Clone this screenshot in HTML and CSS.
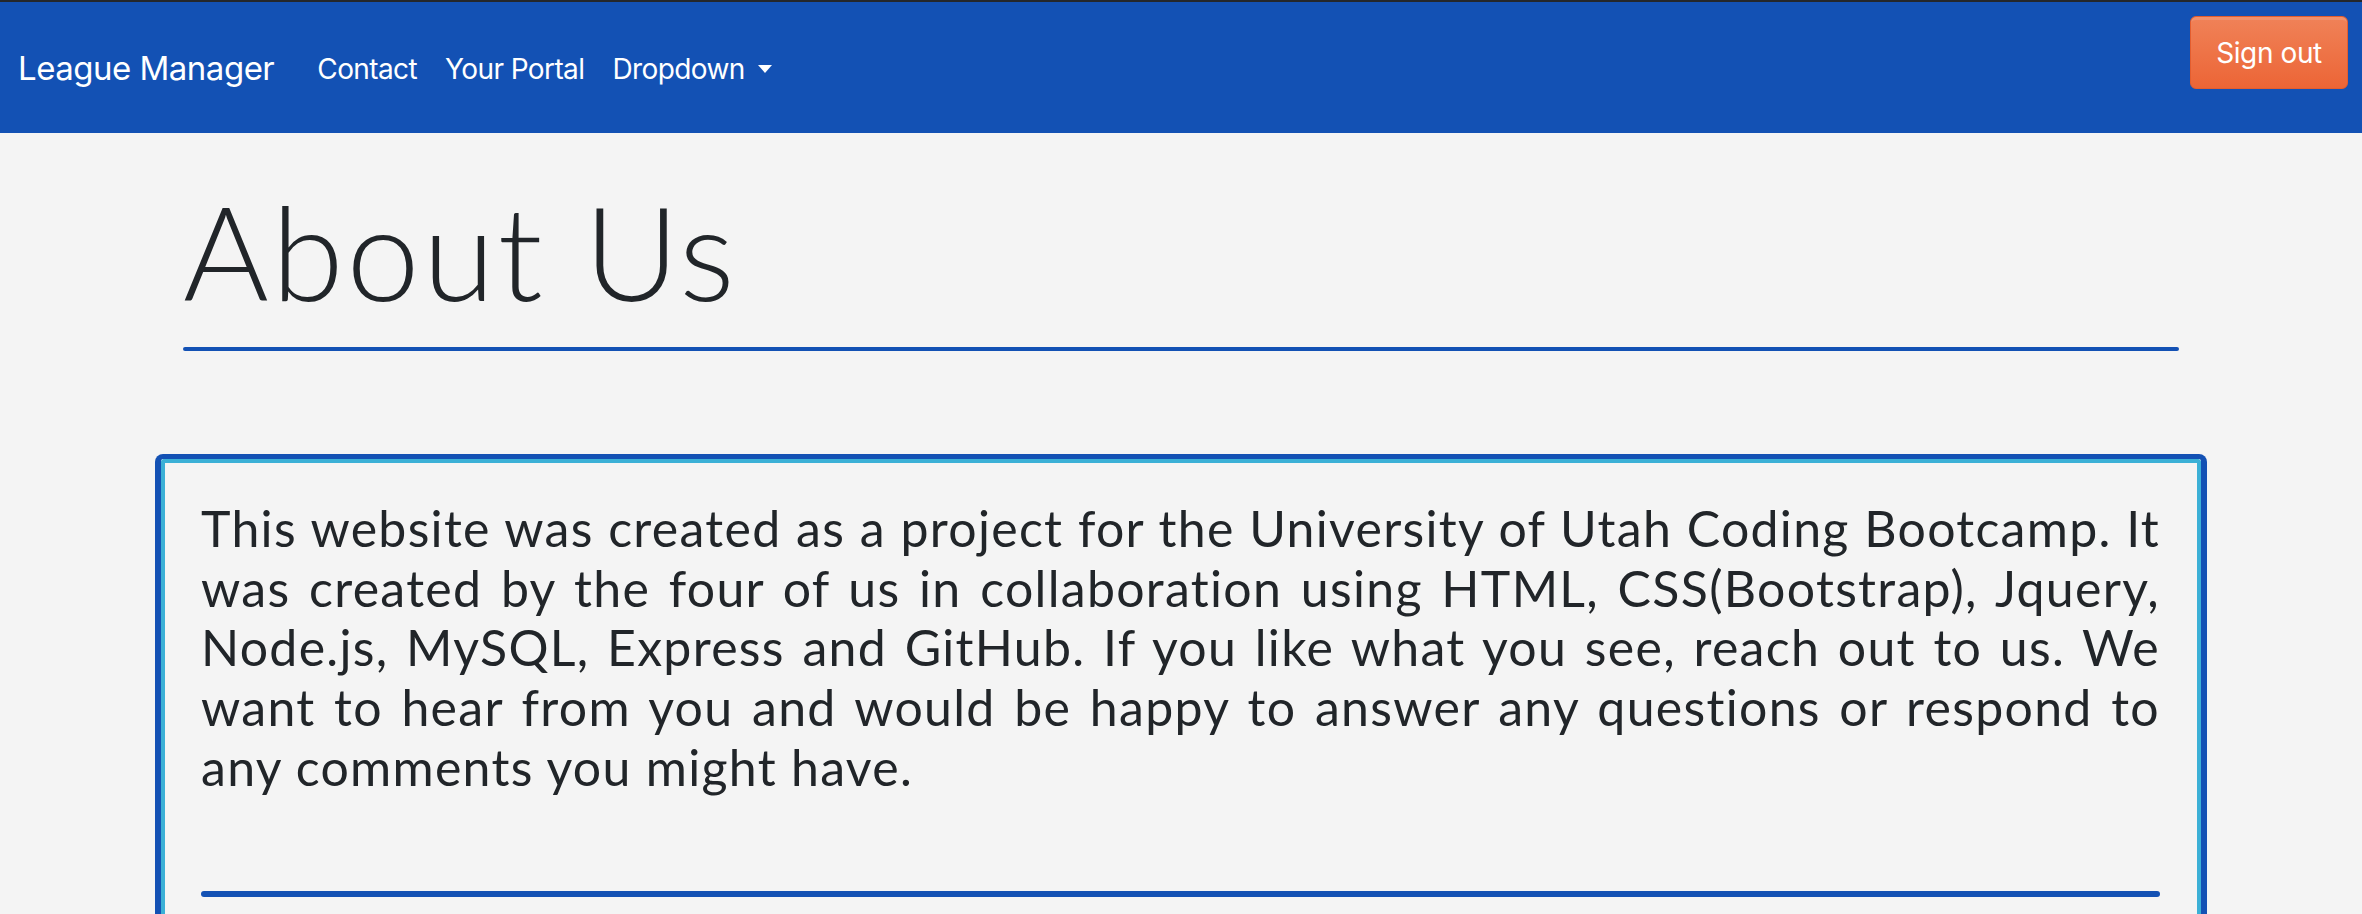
FILE: index.html
```html
<!DOCTYPE html>
<html lang="en">
<head>
<meta charset="utf-8">
<title>About Us - League Manager</title>
<link rel="stylesheet" href="styles.css">
</head>
<body>
<nav class="navbar">
  <div class="nav-left">
    <a class="brand" href="#">League Manager</a>
    <ul class="nav-links">
      <li><a href="#">Contact</a></li>
      <li><a href="#">Your Portal</a></li>
      <li><a href="#" class="dropdown-toggle">Dropdown<span class="caret"></span></a></li>
    </ul>
  </div>
  <button class="btn-signout" type="button">Sign out</button>
</nav>

<header class="page-head">
  <h1 class="page-title">About Us</h1>
  <hr class="rule">
</header>

<section class="about-card">
  <div class="about-inner">
    <p class="about-text">
      <span class="line">This website was created as a project for the University of Utah Coding Bootcamp. It</span>
      <span class="line">was created by the four of us in collaboration using HTML, CSS(Bootstrap), Jquery,</span>
      <span class="line">Node.js, MySQL, Express and GitHub. If you like what you see, reach out to us. We</span>
      <span class="line">want to hear from you and would be happy to answer any questions or respond to</span>
      <span class="line last">any comments you might have.</span>
    </p>
    <hr class="rule rule-thick">
  </div>
</section>
</body>
</html>
```

FILE: styles.css
```css
* { box-sizing: border-box; }

html, body {
  margin: 0;
  padding: 0;
}

body {
  background: #f4f4f4;
  color: #212529;
  font-family: Inter, "Liberation Sans", sans-serif;
  overflow: hidden;
}

/* ---------- navbar ---------- */
.navbar {
  display: flex;
  justify-content: space-between;
  align-items: flex-start;
  height: 133px;
  padding: 0 14px 0 18px;
  background: #1351b4;
  border-top: 2px solid #24272b;
}

.nav-left {
  display: flex;
  align-items: center;
  align-self: center;
  margin-top: 2px;
}

.brand {
  color: #ffffff;
  text-decoration: none;
  font-size: 33px;
  letter-spacing: -0.5px;
  line-height: 1.5;
  margin-right: 29px;
}

.nav-links {
  display: flex;
  list-style: none;
  margin: 0;
  padding: 0;
}

.nav-links a {
  display: flex;
  align-items: center;
  color: #ffffff;
  text-decoration: none;
  font-size: 28px;
  letter-spacing: -0.6px;
  line-height: 1.5;
  padding: 0 14px;
}

.caret {
  display: inline-block;
  width: 0;
  height: 0;
  margin-left: 13px;
  margin-top: 1px;
  border-top: 8px solid #ffffff;
  border-left: 7px solid transparent;
  border-right: 7px solid transparent;
}

.btn-signout {
  margin-top: 14px;
  width: 158px;
  height: 73px;
  padding: 0;
  border: 1px solid #e35d2e;
  border-radius: 6px;
  background: linear-gradient(#f08258, #ec6536);
  box-shadow: inset 0 5px 0 -2px rgba(255, 255, 255, 0.12);
  color: #ffffff;
  font-family: Inter, "Liberation Sans", sans-serif;
  font-size: 28px;
  letter-spacing: -0.4px;
  line-height: 1;
  cursor: pointer;
}

/* ---------- heading ---------- */
.page-head {
  width: 1996px;
  margin: 0 auto;
  padding-top: 39px;
}

.page-title {
  margin: 0;
  font-family: Lato, "Open Sans", sans-serif;
  font-weight: 300;
  font-size: 131px;
  line-height: 1.2;
  color: #212529;
  letter-spacing: 3px;
}

.rule {
  height: 4px;
  margin: 18px 0 0;
  border: 0;
  border-radius: 2px;
  background: #1351b4;
}

/* ---------- about card ---------- */
.about-card {
  width: 2052px;
  margin: 103px auto 0;
  border: 5px solid #1351b4;
  border-width: 5px 6px 0 6px;
  border-radius: 8px 8px 0 0;
}

.about-inner {
  border: 4px solid #3bb0d6;
  border-bottom: 0;
  border-radius: 4px 4px 0 0;
  padding: 36px 37px 120px 36px;
}

.about-text {
  margin: 0;
  font-family: Lato, "Open Sans", sans-serif;
  font-size: 50px;
  line-height: 59.6px;
  color: #212529;
  letter-spacing: 1.3px;
}

.line {
  display: block;
  white-space: nowrap;
  text-align: justify;
  text-align-last: justify;
}

.line.last {
  text-align-last: left;
}

.rule-thick {
  height: 6px;
  border-radius: 3px;
  margin-top: 94px;
}
```
